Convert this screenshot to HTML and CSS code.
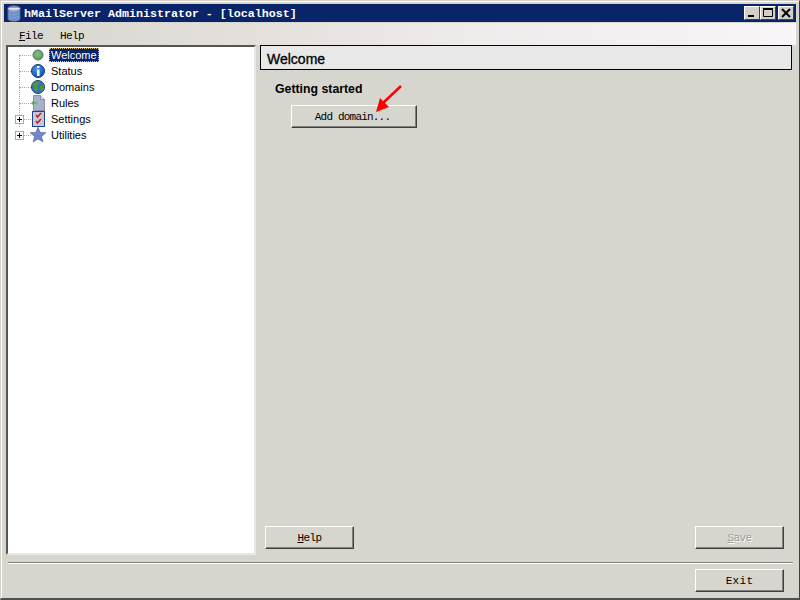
FILE: index.html
```html
<!DOCTYPE html>
<html lang="en">

<head>
    <meta charset="UTF-8">
    <title>hMailServer Administrator - [localhost]</title>
    <link rel="stylesheet" href="styles.css">
</head>

<body>
    <div class="window">
        <div class="titlebar">
            <svg class="app-icon" width="14" height="17" viewBox="0 0 14 17">
                <path d="M1 3c0-3 12-3 12 0v11c0 3-12 3-12 0z" fill="#8f9dc4" stroke="#55607c" />
                <path d="M1 3c0 2.500 12 2.500 12 0" fill="#dfe4ee" stroke="#c8d0e4" />
                <path d="M2 7c3 1.500 7 1.500 10 0M2 10c3 1.500 7 1.500 10 0M2 13c3 1.500 7 1.500 10 0" fill="none" stroke="#5f8fe0" stroke-width="1.500" />
            </svg>
            <span class="title-text">hMailServer Administrator - [localhost]</span>
            <div class="win-buttons">
                <div class="win-btn">
                    <svg width="14" height="12" viewBox="0 0 14 12"><path d="M3 8h6v2H3z" fill="#000" /></svg>
                </div>
                <div class="win-btn">
                    <svg width="14" height="12" viewBox="0 0 14 12"><path d="M2.500 2.500h9v7h-9zM2 1.500h10" fill="none" stroke="#000" /></svg>
                </div>
                <div class="win-btn win-close">
                    <svg width="14" height="12" viewBox="0 0 14 12"><path d="M3 2l8 8M11 2l-8 8" fill="none" stroke="#000" stroke-width="2" /></svg>
                </div>
            </div>
        </div>

        <div class="menubar">
            <span class="menu-item"><u>F</u>ile</span>
            <span class="menu-item">Help</span>
        </div>

        <div class="main">
            <div class="tree">
                <div class="tree-line"></div>
                <div class="tree-row">
                    <span class="expander-slot"></span>
                    <svg class="tree-icon" width="16" height="16" viewBox="0 0 16 16">
                        <defs>
                            <radialGradient id="ballGreen" cx="0.45" cy="0.4" r="0.6">
                                <stop offset="0" stop-color="#8cc070" />
                                <stop offset="1" stop-color="#5c9a58" />
                            </radialGradient>
                            <radialGradient id="ballBlue" cx="0.4" cy="0.35" r="0.7">
                                <stop offset="0" stop-color="#4a9ae8" />
                                <stop offset="1" stop-color="#0f4cb0" />
                            </radialGradient>
                        </defs>
                        <circle cx="8" cy="8" r="5" fill="url(#ballGreen)" stroke="#4f6f90" />
                    </svg>
                    <span class="tree-label selected">Welcome</span>
                </div>
                <div class="tree-row">
                    <span class="expander-slot"></span>
                    <svg class="tree-icon" width="16" height="16" viewBox="0 0 16 16">
                        <circle cx="8" cy="8" r="6.500" fill="url(#ballBlue)" stroke="#123a80" />
                        <path d="M7 3h2.500v2H7zM7 6.500h2.500V13H7z" fill="#fff" />
                    </svg>
                    <span class="tree-label">Status</span>
                </div>
                <div class="tree-row">
                    <span class="expander-slot"></span>
                    <svg class="tree-icon" width="16" height="16" viewBox="0 0 16 16">
                        <circle cx="8" cy="8" r="6.500" fill="#2f78b8" stroke="#1c3f70" />
                        <path d="M2 6l3-3 4-1 1 2-3 2 1 3-1 4-2-1-1-4zM10 7l4-1 0 4-3 3-1-3z" fill="#4f9440" />
                    </svg>
                    <span class="tree-label">Domains</span>
                </div>
                <div class="tree-row">
                    <span class="expander-slot"></span>
                    <svg class="tree-icon" width="16" height="16" viewBox="0 0 16 16">
                        <path d="M3.500 0.500h7l4 4v11h-11z" fill="#a8b0cc" stroke="#8a90ac" />
                        <path d="M10.500 0.500v4h4" fill="#dfe4f2" stroke="#8a90ac" />
                        <path d="M1 8l3-3v2h3v2H4v2z" fill="#5faa4a" />
                        <path d="M6 6.500h2v3H6z" fill="#7fc06c" />
                    </svg>
                    <span class="tree-label">Rules</span>
                </div>
                <div class="tree-row">
                    <span class="expander"></span>
                    <svg class="tree-icon" width="16" height="16" viewBox="0 0 16 16">
                        <rect x="2.500" y="0.500" width="12" height="15" fill="#c4c8d8" stroke="#24408c" />
                        <path d="M6 4l1.500 2L11 2M6 10l1.500 2L11 8" fill="none" stroke="#c02020" stroke-width="1.500" />
                    </svg>
                    <span class="tree-label">Settings</span>
                </div>
                <div class="tree-row">
                    <span class="expander"></span>
                    <svg class="tree-icon" width="16" height="16" viewBox="0 0 16 16">
                        <path d="M8 0l2.200 5.300 5.800.4-4.400 3.700 1.400 5.600L8 12l-4.900 3 1.400-5.600L0 5.700l5.800-.4z" fill="#6f86c8" stroke="#4a5c9c" stroke-width="0.500" />
                    </svg>
                    <span class="tree-label">Utilities</span>
                </div>
            </div>

            <div class="content">
                <div class="content-header">Welcome</div>
                <div class="section-title">Getting started</div>
                <div class="arrow-wrap">
                    <button class="btn btn-add">Add domain...</button>
                    <svg class="red-arrow" width="30" height="30" viewBox="0 0 30 30">
                        <path d="M27 1L9 18" stroke="#f00" stroke-width="2.500" fill="none" />
                        <path d="M2 27l4-14 9 9z" fill="#f00" />
                    </svg>
                </div>
                <div class="content-footer">
                    <button class="btn"><u>H</u>elp</button>
                    <button class="btn btn-disabled"><u>S</u>ave</button>
                </div>
            </div>
        </div>

        <div class="separator"></div>
        <div class="bottombar">
            <button class="btn btn-exit">Exit</button>
        </div>
    </div>
</body>

</html>
```

FILE: styles.css
```css
html,
body {
    margin: 0;
    padding: 0;
}

.window {
    width: 800px;
    height: 600px;
    box-sizing: border-box;
    background: #d6d6ce;
    padding: 3px 3px 2px 3px;
    border-top: 1px solid #d4d0c8;
    border-left: 1px solid #d4d0c8;
    border-right: 1px solid #404040;
    border-bottom: 2px solid #505050;
    box-shadow: inset 1px 1px 0 #fff;
    display: flex;
    flex-direction: column;
}

.titlebar {
    height: 18px;
    flex: none;
    background: #0a246a;
    color: #fff;
    display: flex;
    align-items: center;
    font-family: "Liberation Mono", monospace;
    font-weight: bold;
    font-size: 11.670px;
}

.app-icon {
    margin: 0 3px 0 3px;
}

.title-text {
    flex: 1;
    padding-top: 1px;
}

.win-buttons {
    display: flex;
    margin-right: 2px;
}

.win-btn {
    width: 16px;
    height: 14px;
    background: #d4d0c8;
    border: 1px solid;
    border-color: #fff #404040 #404040 #fff;
    box-sizing: border-box;
    display: flex;
    align-items: center;
    justify-content: center;
}

.win-close {
    margin-left: 2px;
}

.menubar {
    height: 22px;
    flex: none;
    margin-top: 1px;
    background: linear-gradient(to right, #d6d6ce 0, #e6e0dc 32%, #f0ecec 60%, #f9f5f8 100%);
    display: flex;
    align-items: center;
    padding: 3px 0 0 8px;
    box-sizing: border-box;
    font-family: "Liberation Mono", monospace;
    font-size: 11px;
    letter-spacing: -0.600px;
}

.menu-item {
    margin: 0 7px;
    padding-right: 3px;
}

.main {
    flex: 1;
    display: flex;
    min-height: 0;
    padding-left: 2px;
}

.tree {
    width: 250px;
    height: 510px;
    box-sizing: border-box;
    position: relative;
    background: #fff;
    border: 2px solid;
    border-color: #555 #e8e8e0 #e8e8e0 #555;
    font-family: "Liberation Sans", sans-serif;
    font-size: 11px;
}

.tree-line {
    position: absolute;
    left: 11px;
    top: 8px;
    height: 72px;
    border-left: 1px dotted #aaa;
}

.tree-row {
    height: 16px;
    display: flex;
    align-items: center;
}

.expander-slot,
.expander {
    width: 18px;
    flex: none;
    position: relative;
    margin-left: 6px;
    height: 100%;
}

.expander-slot::after,
.expander::after {
    content: "";
    position: absolute;
    left: 5px;
    right: 1px;
    top: 50%;
    border-top: 1px dotted #aaa;
}

.expander::before {
    content: "";
    position: absolute;
    z-index: 1;
    left: 1px;
    top: 4px;
    width: 7px;
    height: 7px;
    border: 1px solid #aaa;
    background:
        linear-gradient(#000, #000) center / 5px 1px no-repeat,
        linear-gradient(#000, #000) center / 1px 5px no-repeat,
        #fff;
}

.tree-icon {
    flex: none;
    margin-left: -2px;
}

.tree-label {
    margin-left: 3px;
    padding: 0 2px;
    height: 14px;
    line-height: 14px;
}

.selected {
    background: #0a246a;
    color: #fff;
    outline: 1px dotted #d8c070;
    outline-offset: -1px;
}

.content {
    flex: 1;
    display: flex;
    flex-direction: column;
    margin-left: 4px;
    margin-right: 4px;
    font-family: "Liberation Sans", sans-serif;
}

.content-header {
    height: 25px;
    box-sizing: border-box;
    background: #e8e8e8;
    border: 1px solid #000;
    padding-left: 6px;
    line-height: 27px;
    font-size: 14px;
    -webkit-text-stroke: 0.300px #000;
}

.section-title {
    font-size: 12.300px;
    font-weight: bold;
    margin: 12px 0 0 15px;
    height: 23px;
    line-height: 14px;
}

.arrow-wrap {
    position: relative;
    margin-left: 31px;
}

.red-arrow {
    position: absolute;
    left: 83px;
    top: -20px;
}

.btn {
    display: block;
    width: 89px;
    height: 23px;
    box-sizing: border-box;
    padding: 1px 0 0 0;
    background: #d6d6ce;
    border: 1px solid;
    border-color: #fff #404040 #404040 #fff;
    box-shadow: inset -1px -1px 0 #808080;
    font-family: "Liberation Mono", monospace;
    font-size: 11px;
    letter-spacing: -0.600px;
    color: #000;
}

.btn-add {
    width: 126px;
    padding-right: 3px;
    letter-spacing: -0.800px;
}

.btn-exit {
    letter-spacing: 0.300px;
}

.btn-disabled {
    color: #9a9a94;
    text-shadow: 1px 1px 0 #fff;
}

.content-footer {
    margin-top: auto;
    display: flex;
    justify-content: space-between;
    padding: 0 8px 0 5px;
    margin-bottom: 11px;
}

.separator {
    flex: none;
    height: 1px;
    margin: 2px 3px 0 4px;
    background: #808080;
    border-bottom: 1px solid #fff;
}

.bottombar {
    height: 32px;
    flex: none;
    display: flex;
    justify-content: flex-end;
    align-items: flex-start;
    padding: 5px 12px 0 0;
    box-sizing: border-box;
}
```
